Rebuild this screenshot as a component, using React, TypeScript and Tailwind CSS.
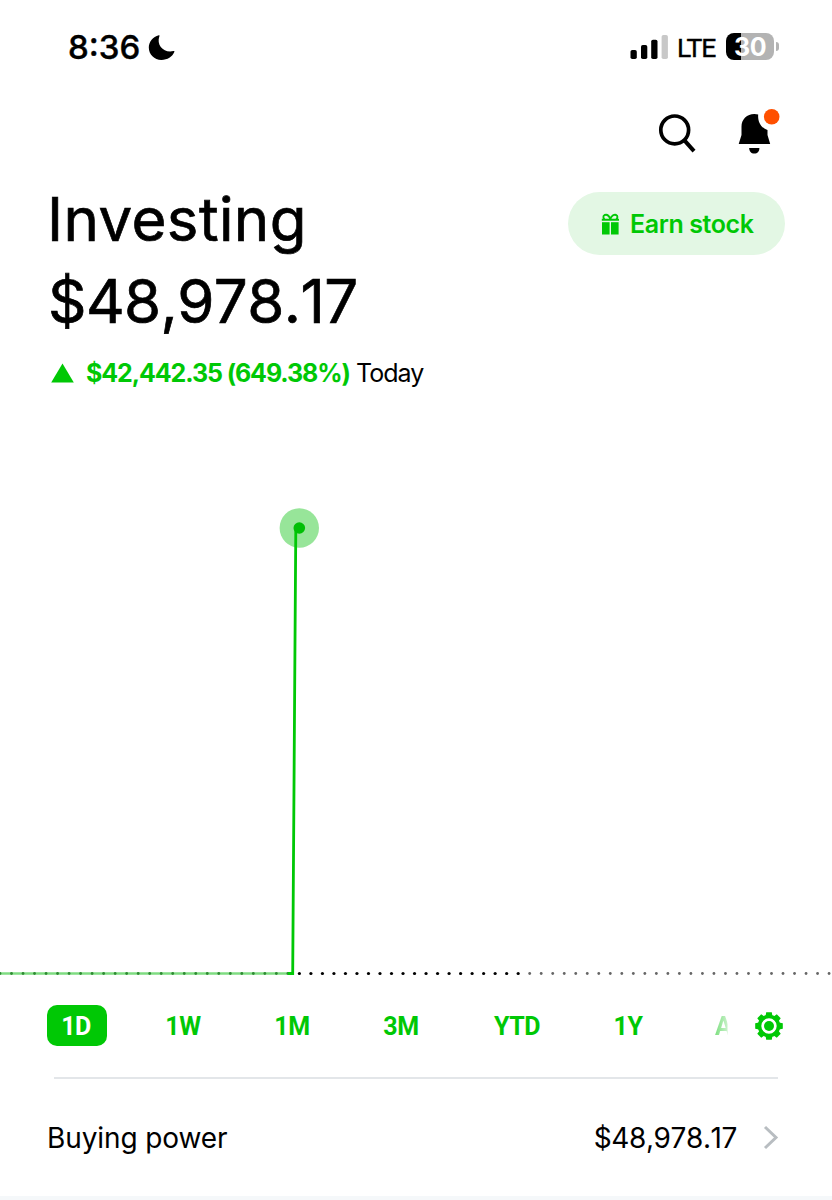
const GREEN = "#00c805";

const ranges = [
  { label: "1W", cell: "w-[36px] ml-[58px]" },
  { label: "1M", cell: "w-[36px] ml-[73px]" },
  { label: "3M", cell: "w-[36px] ml-[73px]" },
  { label: "YTD", cell: "w-[48px] ml-[74px]" },
  { label: "1Y", cell: "w-[30px] ml-[72px]" },
];

const DOT_STEP = 11.515;
const dots = Array.from({ length: 73 }, (_, i) => i);

function dotColor(i: number) {
  if (i < 26) return "#2f8a33";
  return i < 46 ? "#000000" : "#666666";
}

function StatusBar() {
  return (
    <div className="flex h-[96px] items-start pl-[68px] pr-[53px]">
      <div className="flex items-start pt-[27px]">
        <span className="w-[73px] text-[33px] leading-[41px] font-medium [-webkit-text-stroke:0.4px_#000]">8:36</span>
        <svg className="mt-[7px] ml-[7px]" width="27" height="27" viewBox="148 34 27 27">
          <path
            d="M158.8 35.2C153 36.5 148.8 41.7 148.8 47.6C148.8 54.6 154.3 60 161.4 60C167.4 60 172.4 56.800 174.400 51.800C174.600 51.200 174.100 50.800 173.500 51C164.500 53.500 156 45.500 159.400 36.200C159.700 35.400 159.400 35.100 158.800 35.200Z"
            fill="#000"
          />
        </svg>
      </div>
      <div className="ml-auto flex h-[96px] items-start">
        <svg className="mt-[34px]" width="40" height="26" viewBox="630 34 40 26">
          <rect x="630.5" y="50" width="6.300" height="9" rx="1.800" />
          <rect x="641" y="45" width="6.300" height="14" rx="1.800" />
          <rect x="651.200" y="39.800" width="6.300" height="19.200" rx="1.800" />
          <rect x="661.600" y="35" width="6.300" height="24" rx="1.800" fill="#c8c8c8" />
        </svg>
        <span className="mt-[32px] ml-[7px] w-[49px] font-[Roboto] text-[26.5px] leading-[31px] tracking-[-1.2px] [-webkit-text-stroke:0.4px_#000]">
          LTE
        </span>
        <div className="mt-[33px] flex items-center">
          <div className="flex h-[27px] w-[48px] items-center justify-center rounded-[8px] bg-[linear-gradient(90deg,#000_15px,#b3b3b3_15px)]">
            <span className="pt-[2px] text-[25px] leading-[27px] font-bold tracking-[-0.5px] text-white">30</span>
          </div>
          <div className="ml-[2px] h-[9px] w-[3px] rounded-r-full bg-[#b3b3b3]" />
        </div>
      </div>
    </div>
  );
}

function Header() {
  return (
    <>
      <div className="flex h-[70px] justify-end pr-[48px]">
        <svg width="144" height="60" viewBox="640 96 144 60">
          <circle cx="674.700" cy="129.900" r="13.900" fill="none" stroke="#000" strokeWidth="3.700" />
          <path d="M684.200 140.200L694 151.200" stroke="#000" strokeWidth="4" />
          <path
            d="M738.700 144L741.500 135V126.500C741.500 119.300 747 114 754.300 114C755.800 114 757.200 114.200 758.200 114.500C757.600 121.500 760.500 127.500 767.500 130V135L770.200 144Z"
            fill="#000"
          />
          <path d="M749.200 148H759.400C759.400 151.500 757.500 153.600 754.300 153.600C751.100 153.600 749.200 151.500 749.200 148Z" fill="#000" />
          <circle cx="771.700" cy="116.700" r="7.800" fill="#ff5000" />
        </svg>
      </div>
      <div className="flex h-[264px] items-start justify-between pr-[47px] pl-[48px]">
        <div className="flex flex-col pt-[12px]">
          <h1 className="-ml-px h-[83px] text-[60px] leading-[82px] font-normal tracking-[0.4px] [-webkit-text-stroke:0.7px_#000]">
            Investing
          </h1>
          <p className="h-[83px] text-[60px] leading-[81px] tracking-[-0.6px] [font-kerning:none] [-webkit-text-stroke:0.7px_#000]">
            $48,978.17
          </p>
          <div className="mt-[9px] flex h-[40px] items-center pl-[3px]">
            <svg width="23" height="20" viewBox="0 0 23 20">
              <path d="M11.500 0.500L22.800 19.500H0.200Z" fill={GREEN} />
            </svg>
            <span className="ml-[12px] w-[265px] text-[25px] leading-[40px] font-bold tracking-[-1.1px] whitespace-nowrap text-[#00c805]">
              $42,442.35 (649.38%)
            </span>
            <span className="ml-[5px] text-[25px] leading-[40px] tracking-[-1px]">Today</span>
          </div>
        </div>
        <button className="mt-[26px] flex h-[63px] w-[217px] items-center rounded-full bg-[#e3f7e4] pl-[33px] text-[#00c805]">
          <svg width="20" height="22" viewBox="601 212 20 22">
            <rect x="602" y="221.200" width="7.600" height="12.300" fill={GREEN} />
            <rect x="611" y="221.200" width="7.600" height="12.300" fill={GREEN} />
            <path
              d="M601.800 218.700H619M610.300 218C609 214.500 606.500 213.300 604.600 214C603 214.700 603 217 604.600 218.500M610.300 218C611.600 214.500 614.300 213.300 616.200 214C617.800 214.700 617.800 217 616.200 218.500"
              fill="none"
              stroke={GREEN}
              strokeWidth="1.900"
            />
          </svg>
          <span className="ml-[9px] text-[25px] leading-[30px] font-semibold tracking-[-0.4px] whitespace-nowrap">
            Earn stock
          </span>
        </button>
      </div>
    </>
  );
}

function Chart() {
  return (
    <svg className="block" width="832" height="570" viewBox="0 430 832 570">
      <path d="M0 973.500H292" stroke="#7fdc82" strokeWidth="2.600" />
      {dots.map((i) => (
        <circle key={i} cx={i * DOT_STEP} cy="973.500" r={i < 26 || i > 45 ? 1.4 : 1.6} fill={dotColor(i)} />
      ))}
      <circle cx="299.300" cy="528" r="19.700" fill="#97e599" />
      <path d="M288 973.500H292.700L295.800 528" fill="none" stroke={GREEN} strokeWidth="2.800" />
      <circle cx="299.300" cy="528" r="5.800" fill="#00bf05" />
    </svg>
  );
}

function Gear() {
  return (
    <svg width="30" height="30" viewBox="-15 -15 30 30" fill={GREEN}>
      {[0, 45, 90, 135].map((angle) => (
        <path
          key={angle}
          transform={`rotate(${angle})`}
          d="M-3.400 -10L-2.800 -13.800H2.800L3.400 -10V-8H-3.400ZM-3.400 10L-2.800 13.800H2.800L3.400 10V8H-3.400Z"
        />
      ))}
      <circle r="9.500" fill="none" stroke={GREEN} strokeWidth="3.600" />
      <circle r="5" />
    </svg>
  );
}

function RangeTabs() {
  return (
    <div className="flex h-[77px] items-start pt-[5px] pl-[47px] font-[Roboto] text-[25px] font-bold text-[#00c805]">
      <div className="flex h-[41px] w-[60px] items-center justify-center rounded-[10px] bg-[#00c805] pt-[2px] pr-[2px] tracking-[-0.5px] text-white">
        1D
      </div>
      {ranges.map((range) => (
        <div key={range.label} className={`flex h-[41px] items-center justify-center pt-[2px] tracking-[-0.4px] ${range.cell}`}>
          {range.label}
        </div>
      ))}
      <div className="ml-[72px] flex h-[41px] w-[19px] items-center bg-[linear-gradient(90deg,#7cdf7f_0px,#c5f0c6_12px,#ffffff_13px)] bg-clip-text pt-[2px] text-transparent">
        A
      </div>
      <div className="ml-[20px] flex h-[41px] items-center">
        <Gear />
      </div>
    </div>
  );
}

export default function App() {
  return (
    <main className="flex h-[1200px] w-[832px] flex-col overflow-hidden bg-white font-[Inter] text-black">
      <StatusBar />
      <Header />
      <Chart />
      <RangeTabs />
      <div className="mr-[54px] ml-[54px] h-[2px] shrink-0 bg-[#e3e6e9]" />
      <div className="flex h-[117px] shrink-0 items-center pr-[53px] pl-[47px]">
        <span className="text-[28px] leading-[40px] tracking-[-0.1px]">Buying power</span>
        <span className="ml-auto text-[28px] leading-[40px] tracking-[-0.4px] [font-kerning:none]">$48,978.17</span>
        <svg className="ml-[26px]" width="16" height="26" viewBox="0 0 16 26">
          <path d="M2 2L13 12.500L2 23" fill="none" stroke="#b8bdc1" strokeWidth="3" />
        </svg>
      </div>
      <div className="h-[4px] shrink-0 bg-[#f5f8fa]" />
    </main>
  );
}
